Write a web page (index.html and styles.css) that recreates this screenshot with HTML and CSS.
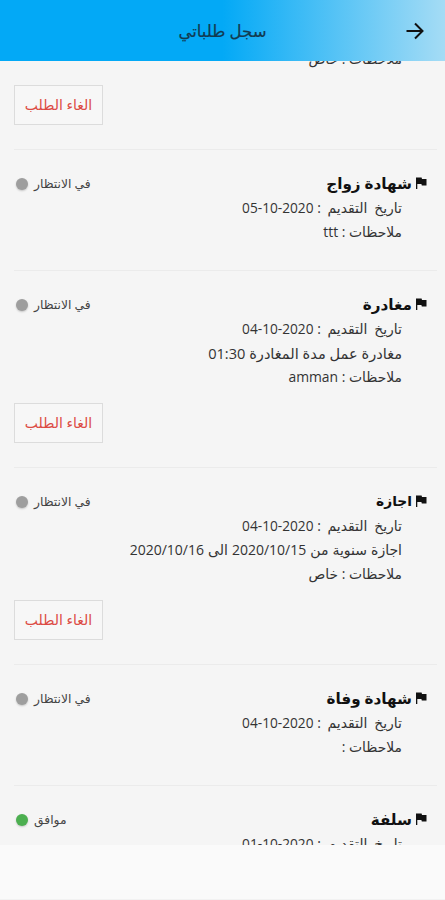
FILE: index.html
```html
<!DOCTYPE html>
<html lang="ar" dir="rtl">
<head>
    <meta charset="UTF-8">
    <title>سجل طلباتي</title>
    <link rel="stylesheet" href="styles.css">
</head>
<body>
    <svg class="sprite" width="0" height="0">
        <symbol id="flag" viewBox="0 0 12 12">
            <path d="M1 0.5H6.6L7 2H11.5V8.5H6.8L6.4 7H2.3V12H1Z"/>
        </symbol>
    </svg>
    <div class="app">
        <header class="header">
            <svg class="back" viewBox="0 0 18 18">
                <path d="M0.5 9H16M9 1.5L16.5 9L9 16.5"/>
            </svg>
            <h1>سجل طلباتي</h1>
        </header>

        <main class="list">
            <!-- scrolled under the header -->
            <div class="item first">
                <p class="notes">ملاحظات : خاص</p>
                <button class="cancel">الغاء الطلب</button>
            </div>

            <div class="item">
                <div class="item-head">
                    <h2><svg class="flag"><use href="#flag"/></svg>شهادة زواج</h2>
                    <div class="status"><span>في الانتظار</span><i class="dot"></i></div>
                </div>
                <p><span class="label">تاريخ التقديم :</span> <bdi dir="ltr">05-10-2020</bdi></p>
                <p class="notes">ملاحظات : ttt</p>
            </div>

            <div class="item">
                <div class="item-head">
                    <h2><svg class="flag"><use href="#flag"/></svg>مغادرة</h2>
                    <div class="status"><span>في الانتظار</span><i class="dot"></i></div>
                </div>
                <p><span class="label">تاريخ التقديم :</span> <bdi dir="ltr">04-10-2020</bdi></p>
                <p class="leave">مغادرة عمل مدة المغادرة 01:30</p>
                <p class="notes">ملاحظات : amman</p>
                <button class="cancel">الغاء الطلب</button>
            </div>

            <div class="item">
                <div class="item-head">
                    <h2 class="short"><svg class="flag"><use href="#flag"/></svg>اجازة</h2>
                    <div class="status"><span>في الانتظار</span><i class="dot"></i></div>
                </div>
                <p><span class="label">تاريخ التقديم :</span> <bdi dir="ltr">04-10-2020</bdi></p>
                <p class="period">اجازة سنوية من 2020/10/15 الى 2020/10/16</p>
                <p class="notes">ملاحظات : خاص</p>
                <button class="cancel">الغاء الطلب</button>
            </div>

            <div class="item">
                <div class="item-head">
                    <h2><svg class="flag"><use href="#flag"/></svg>شهادة وفاة</h2>
                    <div class="status"><span>في الانتظار</span><i class="dot"></i></div>
                </div>
                <p><span class="label">تاريخ التقديم :</span> <bdi dir="ltr">04-10-2020</bdi></p>
                <p class="notes">ملاحظات :</p>
            </div>

            <div class="item">
                <div class="item-head">
                    <h2><svg class="flag"><use href="#flag"/></svg>سلفة</h2>
                    <div class="status"><span>موافق</span><i class="dot approved"></i></div>
                </div>
                <p><span class="label">تاريخ التقديم :</span> <bdi dir="ltr">01-10-2020</bdi></p>
            </div>
        </main>

        <footer class="bottom"></footer>
    </div>
</body>
</html>
```

FILE: styles.css
```css
* {
    box-sizing: border-box;
}
body {
    margin: 0;
    background: #fafafa;
    color: #333;
    font-family: "Open Sans", "DejaVu Sans", sans-serif;
}
.sprite {
    position: absolute;
}
.app {
    height: 100vh;
    display: flex;
    flex-direction: column;
    overflow: hidden;
}
.header {
    flex: none;
    height: 61px;
    padding: 1px 21px 0 0;
    display: flex;
    align-items: center;
    background: linear-gradient(to right, #03a9f6 50%, #a5dcf5 100%);
}
.header h1 {
    flex: 1;
    margin: 0;
    padding-left: 39px;
    text-align: center;
    font-size: 16.5px;
    line-height: 24px;
    font-weight: 400;
    color: #123a50;
    -webkit-text-stroke: 0.2px #123a50;
}
.back {
    width: 18px;
    height: 18px;
    fill: none;
    stroke: #111;
    stroke-width: 2;
}
.list {
    flex: 1;
    min-height: 0;
    overflow: hidden;
    padding: 0 8px 0 14px;
    background: #f5f5f5;
}
.item {
    padding: 19px 10px 26px 0;
    border-bottom: 1px solid #ebebeb;
}
.item.first {
    margin-top: -14px;
    padding-top: 0;
}
.item-head {
    height: 27px;
    display: flex;
    justify-content: space-between;
    align-items: center;
}
.item h2 {
    display: flex;
    align-items: center;
    gap: 3px;
    margin: 0;
    font-size: 15.2px;
    line-height: 26px;
    color: #111;
}
.item h2.short {
    font-size: 13.8px;
}
.flag {
    width: 12px;
    height: 12px;
    fill: #111;
}
.status {
    display: flex;
    align-items: center;
    gap: 6px;
    padding: 3px 0 0 2px;
    font-size: 12.3px;
    line-height: 20px;
    color: #444;
}
.dot {
    width: 12px;
    height: 12px;
    border-radius: 50%;
    background: #9e9e9e;
    box-shadow: 0 1px 2px rgba(0, 0, 0, 0.2);
}
.dot.approved {
    background: #4caf50;
}
.item p {
    height: 24px;
    margin: 0 25px 0 0;
    font-size: 14px;
    line-height: 24px;
    white-space: nowrap;
}
.item p.leave {
    font-size: 14.6px;
}
.item p.period {
    word-spacing: 0.4px;
}
.item p.notes {
    font-size: 13.9px;
}
.item bdi {
    font-size: 13.7px;
}
.label {
    word-spacing: 3px;
}
.cancel {
    display: block;
    width: 89px;
    height: 40px;
    margin: 14px auto -2px 0;
    padding: 0 0 2px;
    border: 1px solid #dcdcdc;
    background: #f7f7f7;
    color: #dc4a43;
    font-family: inherit;
    font-size: 14px;
}
.bottom {
    flex: none;
    height: 55px;
    background: #fafafa;
    border-bottom: 1px solid #f2f2f2;
}
```
